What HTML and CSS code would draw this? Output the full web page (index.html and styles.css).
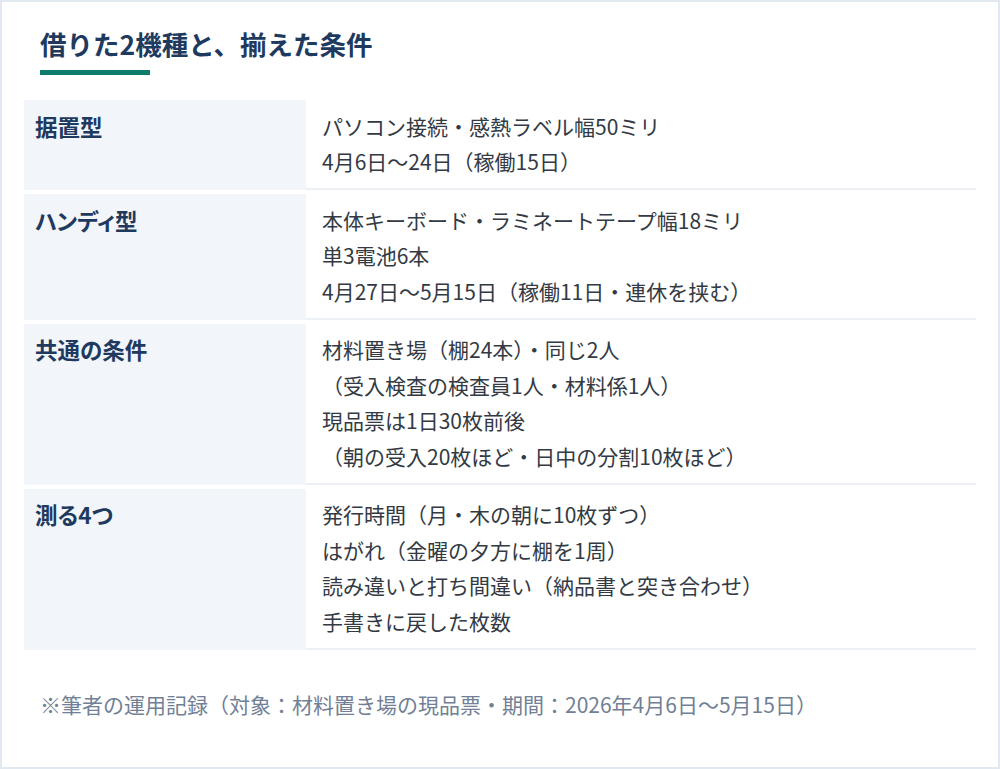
FILE: index.html
```html
<!DOCTYPE html>
<html lang="ja">
<head>
<meta charset="utf-8">
<title>借りた2機種と、揃えた条件</title>
<link rel="stylesheet" href="styles.css">
</head>
<body>
<main class="card">
  <header class="head">
    <h1 class="title">借りた2機種と、揃えた条件</h1>
    <div class="bar"></div>
  </header>
  <dl class="spec">
    <dt class="label">据置型</dt>
    <dd class="value">パソコン接続・感熱ラベル幅50ミリ<br>4月6日～24日（稼働15日）</dd>
    <dt class="label">ハンディ型</dt>
    <dd class="value">本体キーボード・ラミネートテープ幅18ミリ<br>単3電池6本<br>4月27日～5月15日（稼働11日・連休を挟む）</dd>
    <dt class="label">共通の条件</dt>
    <dd class="value">材料置き場（棚24本）・同じ2人<br>（受入検査の検査員1人・材料係1人）<br>現品票は1日30枚前後<br>（朝の受入20枚ほど・日中の分割10枚ほど）</dd>
    <dt class="label">測る4つ</dt>
    <dd class="value">発行時間（月・木の朝に10枚ずつ）<br>はがれ（金曜の夕方に棚を1周）<br>読み違いと打ち間違い（納品書と突き合わせ）<br>手書きに戻した枚数</dd>
  </dl>
  <p class="note">※筆者の運用記録（対象：材料置き場の現品票・期間：2026年4月6日～5月15日）</p>
</main>
</body>
</html>
```
FILE: styles.css
```css
html, body {
  margin: 0;
  padding: 0;
  background: #ffffff;
}
body {
  font-family: "Noto Sans CJK JP", "Noto Sans", sans-serif;
}
.card {
  box-sizing: border-box;
  width: 1000px;
  height: 769px;
  border: 2px solid #e2e8f0;
  background: #ffffff;
  padding: 24px 22px 0 22px;
}
.head {
  padding-left: 16px;
}
.title {
  margin: 0;
  font-size: 26.5px;
  line-height: 36px;
  font-weight: 700;
  color: #1e3a5f;
}
.bar {
  width: 110px;
  height: 5px;
  margin-top: 8px;
  background: #0e7c6b;
}
.spec {
  display: grid;
  grid-template-columns: 282px 1fr;
  row-gap: 4px;
  margin: 25px 0 0 0;
}
.label {
  background: #f2f5f9;
  padding: 8.5px 11px;
  font-size: 22.5px;
  line-height: 35.5px;
  font-weight: 700;
  color: #1e3a5f;
  font-feature-settings: "palt";
}
.value {
  margin: 0;
  padding: 8.5px 16px;
  border-bottom: 2px solid #edf1f6;
  font-size: 21px;
  line-height: 35.5px;
  color: #333a44;
}
.note {
  margin: 37px 0 0 0;
  padding-left: 16px;
  font-size: 21px;
  line-height: 35px;
  color: #718096;
}
```
